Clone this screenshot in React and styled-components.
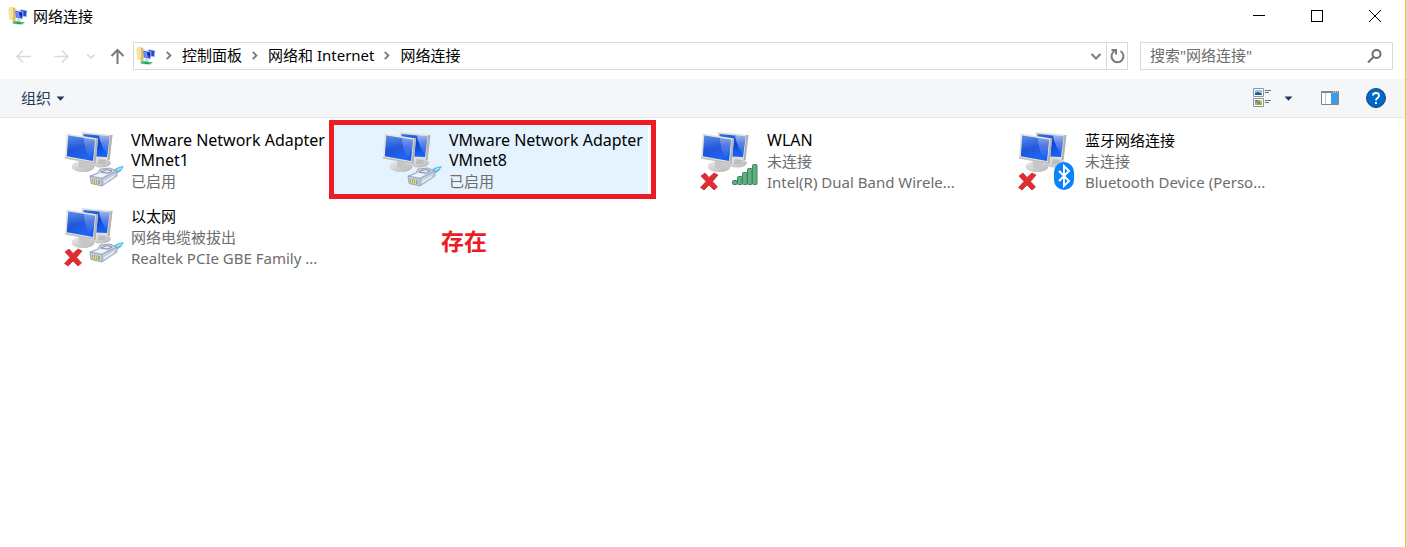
import React from "react";
import styled, { createGlobalStyle, css } from "styled-components";

const GlobalStyle = createGlobalStyle`
  * { box-sizing: border-box; }
  body {
    margin: 0;
    background: #fff;
    color: #000;
    font-family: "Noto Sans", "Noto Sans CJK SC", sans-serif;
    font-size: 15px;
    line-height: 21px;
  }
  button, input {
    font: inherit;
    color: inherit;
    border: 0;
    padding: 0;
    margin: 0;
    background: none;
  }
  button { display: flex; align-items: center; justify-content: center; }
  svg { display: block; flex: none; }
`;

const Window = styled.div`
  display: flex;
  flex-direction: column;
  min-height: 100vh;
  margin-right: 1px;
  border-right: 1px solid #fcbc1c;
  box-shadow: 1px 0 0 #dedede;
`;

const TitleBar = styled.header`
  display: flex;
  align-items: center;
  height: 32px;
  padding: 0 1px 0 8px;
`;

const Title = styled.h1`
  flex: 1;
  margin: 0 0 0 5px;
  font-size: 15px;
  font-weight: 400;
`;

const WindowButton = styled.button`
  width: 58px;
  height: 32px;
`;

const AddressRow = styled.div`
  display: flex;
  align-items: center;
  height: 47px;
  padding: 0 12px 0 13px;
`;

const NavButtons = styled.div`
  display: flex;
  align-items: center;
  margin-right: 6px;
`;

const NavButton = styled.button`
  width: 20px;
  height: 28px;
  margin-left: ${(p) => p.$gap}px;
`;

const AddressBar = styled.div`
  display: flex;
  align-items: center;
  flex: 1;
  height: 28px;
  border: 1px solid #d9d9d9;
  padding-left: 2px;
`;

const Crumbs = styled.nav`
  display: flex;
  align-items: center;
  flex: 1;
`;

const Crumb = styled.a`
  color: #000;
  text-decoration: none;
`;

const CrumbArrow = styled.span`
  display: flex;
  justify-content: center;
  width: 26px;
`;

const AddressButton = styled.button`
  width: 20px;
  height: 26px;
  ${(p) => p.$divided && css`width: 21px; border-left: 1px solid #d9d9d9;`}
`;

const SearchBox = styled.label`
  display: flex;
  align-items: center;
  width: 253px;
  height: 28px;
  margin-left: 12px;
  padding: 0 10px 0 9px;
  border: 1px solid #d9d9d9;
`;

const SearchInput = styled.input`
  flex: 1;
  min-width: 0;
  outline: 0;
  &::placeholder { color: #6d6d6d; opacity: 1; }
`;

const CommandBar = styled.div`
  display: flex;
  align-items: center;
  height: 39px;
  padding: 0 19px 0 21px;
  background: #f5f6f7;
  border-bottom: 1px solid #e5e6e8;
  color: #1e395b;
`;

const OrganizeButton = styled.button`
  gap: 5px;
  margin-right: auto;
`;

const ToolButton = styled.button`
  height: 28px;
  margin-left: ${(p) => p.$gap}px;
`;

const ConnectionList = styled.ul`
  display: grid;
  grid-template-columns: repeat(auto-fill, 314px);
  grid-auto-rows: 69px;
  gap: 7px 4px;
  margin: 0;
  padding: 7px 16px;
  list-style: none;
`;

const Connection = styled.li`
  position: relative;
  display: flex;
  padding: 5px 0 0 48px;
  background: ${(p) => (p.$selected ? "#e5f3ff" : "transparent")};
`;

const ConnectionText = styled.div`
  width: 195px;
  margin-left: 7px;
`;

const Name = styled.div`
  padding-bottom: 1px;
  font-size: ${(p) => (p.$latin ? 16 : 15)}px;
  line-height: 20px;
`;

const Detail = styled.div`
  color: #6d6d6d;
  white-space: nowrap;
`;

const Highlight = styled.div`
  position: absolute;
  inset: -5px -8px -5px -5px;
  border: 5px solid #ed1c24;
`;

const Note = styled.strong`
  position: absolute;
  top: 99px;
  left: 107px;
  color: #ed1c24;
  font-size: 23px;
  line-height: 34px;
`;

function FolderIcon() {
  return (
    <svg width="20" height="20" viewBox="0 0 20 20" aria-hidden="true">
      <path d="M0.500 1.500L5 0.500L6 15L1 13.500Z" fill="#f7e3a0" />
      <path d="M5 1.500L7.500 2V15.500L5 16.500Z" fill="#e0bd5c" />
      <path d="M12 3.500L19 4.500L18.500 11L13 10Z" fill="#2a49cf" stroke="#c6d3e6" strokeWidth="0.800" />
      <path d="M7 4.500L15 6L14.500 13L7.500 11.500Z" fill="#1226c4" stroke="#c6d3e6" strokeWidth="0.800" />
      <path d="M8 5.500L11 6Q11 9 13 12L8.200 11Z" fill="#6b8ff0" />
      <path d="M9 13L13 13.500L12.500 15H9Z" fill="#c9d0d6" />
      <path d="M4 16L8 15L17 16.500L14 18.500L6 18Z" fill="#3cc27c" />
      <path d="M9 16L13 16.500L12 18L8.500 17.500Z" fill="#149a50" />
    </svg>
  );
}

function Chevron({ down, size = 12, color = "#7a7a7a" }) {
  return (
    <svg width={size} height={size} viewBox="0 0 12 12" fill="none" stroke={color} strokeWidth="2" aria-hidden="true">
      <path d={down ? "M1.500 4L6 8.500L10.500 4" : "M3 2L7 6L3 10"} />
    </svg>
  );
}

function ArrowIcon({ direction }) {
  const paths = {
    left: "M16 9.500H2M8 3.500L2 9.500L8 15.500",
    right: "M1 9.500H15M9 3.500L15 9.500L9 15.500",
    up: "M8.500 17V3M2.500 9L8.500 3L14.500 9",
  };
  const up = direction === "up";
  return (
    <svg width="17" height="17" viewBox="0 0 17 17" fill="none" stroke={up ? "#7a7a7a" : "#dadada"} strokeWidth={up ? 2 : 1.6} aria-hidden="true">
      <path d={paths[direction]} />
    </svg>
  );
}

function Caret() {
  return (
    <svg width="9" height="5" viewBox="0 0 9 5" aria-hidden="true">
      <path d="M0.500 0.500H8.500L4.500 4.800Z" fill="#1e395b" />
    </svg>
  );
}

function IconGradients() {
  return (
    <defs>
      <linearGradient id="screen" x1="0" y1="0" x2="0.300" y2="1">
        <stop offset="0" stopColor="#2c74e4" />
        <stop offset="0.550" stopColor="#0b44d6" />
        <stop offset="1" stopColor="#1660f4" />
      </linearGradient>
      <linearGradient id="glare" x1="0" y1="0" x2="0" y2="1">
        <stop offset="0" stopColor="#fff" stopOpacity="0.550" />
        <stop offset="1" stopColor="#fff" stopOpacity="0.050" />
      </linearGradient>
      <linearGradient id="stand" x1="0" y1="0" x2="1" y2="1">
        <stop offset="0" stopColor="#ececec" />
        <stop offset="1" stopColor="#b4b4b4" />
      </linearGradient>
    </defs>
  );
}

function Monitors() {
  return (
    <>
      <ellipse cx="37" cy="33" rx="10" ry="4.500" fill="url(#stand)" />
      <path d="M35 26h7l-1 8h-7z" fill="#bdbdbd" />
      <path d="M17.500 2L48.500 5L45.500 30L19 28Z" fill="#dededc" />
      <path d="M46.500 5L48.500 5L45.500 30L43.500 30Z" fill="#b0b0ae" />
      <path d="M19.500 4L45.500 6.500L43 27L20.500 26Z" fill="url(#screen)" />
      <path d="M35 5.500L45.500 6.500L43 24Q37 17 35 5.500Z" fill="url(#glare)" />
      <ellipse cx="19" cy="36.500" rx="11.500" ry="5.500" fill="url(#stand)" />
      <path d="M15 31h9l1 6q-5 3-10 0z" fill="#c6c6c6" />
      <path d="M2.500 3.500L34 8.500L31.500 34L1 28.500Z" fill="#e4e4e2" />
      <path d="M32 8.200L34 8.500L31.500 34L29.500 33.600Z" fill="#b2b2b0" />
      <path d="M1 28.500L31.500 34L31.700 32.500L1 27Z" fill="#bfbfbd" />
      <path d="M4.300 5.500L31 9.700L29 31L2.800 26.300Z" fill="url(#screen)" />
      <path d="M4.300 5.500L20 8Q20 21 25 30.300L2.800 26.300Z" fill="url(#glare)" opacity="0.350" />
      <path d="M20 8L31 9.700L30.200 19Q28 26 25 28Q20 19 20 8Z" fill="url(#glare)" opacity="0.800" />
    </>
  );
}

function Plug() {
  return (
    <g>
      <path d="M48 43Q50 37 60 36L57 41Q54 42 51 46Z" fill="#58bfe2" />
      <path d="M50 42L57 38" stroke="#c4effc" strokeWidth="1.200" />
      <path d="M26 46L34 43L36 39L46 38L53 41L53 46L38 56L27 53.500Z" fill="#c3cede" stroke="#8c9ab0" strokeWidth="0.800" />
      <path d="M26 46L38 48.500L53 41M38 48.500V56" fill="none" stroke="#8c9ab0" strokeWidth="0.800" />
      <path d="M29 46L36 43L44 44L38 47.500Z" fill="#eff4fa" />
      <path d="M37 42L43 39.500L48 41L44 43Z" fill="#e3eaf4" stroke="#7688a2" strokeWidth="0.800" />
      <path d="M40 51L50 45L50 47L40 53.500Z" fill="#e2e9f3" />
      <path d="M28 48.500L36 50.200V54.500L28 52.800Z" fill="#a0a898" />
      <path d="M29.500 49V53M31.500 49.500V53.500M33.500 50V54" stroke="#e8dc6a" />
    </g>
  );
}

function Signal() {
  return (
    <g fill="#62ae80" stroke="#3a8760">
      {[0, 1, 2, 3, 4].map((i) => (
        <rect key={i} x={32.5 + i * 5} y={50.5 - i * 4} width="4.500" height={4 + i * 4} rx="1" />
      ))}
    </g>
  );
}

function Bluetooth() {
  return (
    <g>
      <rect x="36" y="32" width="20" height="28" rx="10" fill="#0a84f8" />
      <path d="M41 41L51 51L46 56V36L51 41L41 51" fill="none" stroke="#fff" strokeWidth="1.900" />
    </g>
  );
}

function Cross() {
  return (
    <path
      d="M1 46L5 43L9 47.500L14 43L18 45L12.500 51.500L17.500 57L14 60L9 55L4 60L0.500 57.500L6 51.500Z"
      fill="#e12b30"
      stroke="#c4343a"
      strokeWidth="0.800"
      strokeLinejoin="round"
    />
  );
}

function ConnectionIcon({ badge, disconnected }) {
  const Badge = { plug: Plug, signal: Signal, bluetooth: Bluetooth }[badge];
  return (
    <svg width="60" height="62" viewBox="0 0 60 62" aria-hidden="true">
      <IconGradients />
      <Monitors />
      <Badge />
      {disconnected && <Cross />}
    </svg>
  );
}

const crumbs = ["控制面板", "网络和 Internet", "网络连接"];

const connections = [
  { name: "VMware Network Adapter VMnet1", latin: true, details: ["已启用"], badge: "plug" },
  { name: "VMware Network Adapter VMnet8", latin: true, details: ["已启用"], badge: "plug", selected: true, note: "存在" },
  { name: "WLAN", latin: true, details: ["未连接", "Intel(R) Dual Band Wirele..."], badge: "signal", disconnected: true },
  { name: "蓝牙网络连接", details: ["未连接", "Bluetooth Device (Perso..."], badge: "bluetooth", disconnected: true },
  { name: "以太网", details: ["网络电缆被拔出", "Realtek PCIe GBE Family ..."], badge: "plug", disconnected: true },
];

export default function App() {
  return (
    <Window>
      <GlobalStyle />
      <TitleBar>
        <FolderIcon />
        <Title>网络连接</Title>
        <WindowButton aria-label="最小化">
          <svg width="12" height="12" viewBox="0 0 12 12"><path d="M0 5.500H12" stroke="#000" /></svg>
        </WindowButton>
        <WindowButton aria-label="最大化">
          <svg width="12" height="12" viewBox="0 0 12 12"><rect x="0.500" y="0.500" width="11" height="11" fill="none" stroke="#000" /></svg>
        </WindowButton>
        <WindowButton aria-label="关闭">
          <svg width="12" height="12" viewBox="0 0 12 12"><path d="M0 0L12 12M12 0L0 12" stroke="#000" /></svg>
        </WindowButton>
      </TitleBar>
      <AddressRow>
        <NavButtons>
          <NavButton $gap={0} aria-label="后退"><ArrowIcon direction="left" /></NavButton>
          <NavButton $gap={18} aria-label="前进"><ArrowIcon direction="right" /></NavButton>
          <NavButton $gap={10} aria-label="最近的位置"><Chevron down size={10} color="#dadada" /></NavButton>
          <NavButton $gap={6} aria-label="向上"><ArrowIcon direction="up" /></NavButton>
        </NavButtons>
        <AddressBar>
          <FolderIcon />
          <Crumbs aria-label="地址">
            {crumbs.map((crumb) => (
              <React.Fragment key={crumb}>
                <CrumbArrow><Chevron size={11} /></CrumbArrow>
                <Crumb href="#">{crumb}</Crumb>
              </React.Fragment>
            ))}
          </Crumbs>
          <AddressButton aria-label="以前的位置"><Chevron down /></AddressButton>
          <AddressButton $divided aria-label="刷新">
            <svg width="15" height="16" viewBox="0 0 15 16" fill="none" stroke="#7a7a7a" strokeWidth="2">
              <path d="M10.500 3A6 6 0 1 1 4.500 3M1.500 2H6V6.500" />
            </svg>
          </AddressButton>
        </AddressBar>
        <SearchBox>
          <SearchInput type="search" aria-label="搜索" placeholder={'搜索"网络连接"'} />
          <svg width="15" height="15" viewBox="0 0 15 15" fill="none" stroke="#6e6e6e" strokeWidth="2">
            <circle cx="9.500" cy="6" r="4" />
            <path d="M6.500 9L1 14.500" />
          </svg>
        </SearchBox>
      </AddressRow>
      <CommandBar>
        <OrganizeButton>组织<Caret /></OrganizeButton>
        <ToolButton $gap={0} aria-label="更改视图">
          <svg width="18" height="20" viewBox="0 0 18 20">
            <path d="M0.500 0.500H10.500V8.500H0.500ZM0.500 10.500H10.500V18.500H0.500Z" fill="#fff" stroke="#8e959c" />
            <path d="M2 2H9V7H2Z" fill="#8cc8f0" />
            <path d="M2 5L5 4L9 6V7H2Z" fill="#245685" />
            <path d="M2 12H9V17H2Z" fill="#8dbd50" />
            <path d="M2 12H5V14H2Z" fill="#4e82cf" />
            <path d="M5 14H7V16H5Z" fill="#dd5031" />
            <path d="M7 12H9V14H7Z" fill="#edc449" />
            <path d="M12 2.500H18M12 4.500H16M12 12.500H18M12 14.500H16" stroke="#6e7276" />
          </svg>
        </ToolButton>
        <ToolButton $gap={13} aria-label="更多视图选项"><Caret /></ToolButton>
        <ToolButton $gap={28} aria-label="预览窗格">
          <svg width="18" height="14" viewBox="0 0 18 14">
            <path d="M0.500 0.500H17.500V13.500H0.500Z" fill="#fff" stroke="#7f868c" />
            <path d="M0 0H18V2H0Z" fill="#7f868c" />
            <path d="M4.500 2V13" stroke="#bfc3c7" />
            <path d="M10 2H17V13H10Z" fill="#3f9be5" />
            <path d="M12 1H13M14 1H15M16 1H17" stroke="#fff" />
          </svg>
        </ToolButton>
        <ToolButton $gap={27} aria-label="帮助">
          <svg width="20" height="20" viewBox="0 0 20 20">
            <circle cx="10" cy="10" r="9.500" fill="#0067c5" stroke="#164a7c" />
            <path d="M7 7.500Q7 5 10 5Q13 5 13 7.500Q13 9 11.500 10Q10 11 10 12.500M10 14V16" fill="none" stroke="#fff" strokeWidth="1.900" />
          </svg>
        </ToolButton>
      </CommandBar>
      <ConnectionList>
        {connections.map((c) => (
          <Connection key={c.name} $selected={c.selected}>
            <ConnectionIcon badge={c.badge} disconnected={c.disconnected} />
            <ConnectionText>
              <Name $latin={c.latin}>{c.name}</Name>
              {c.details.map((d) => <Detail key={d}>{d}</Detail>)}
            </ConnectionText>
            {c.note && (
              <>
                <Highlight />
                <Note>{c.note}</Note>
              </>
            )}
          </Connection>
        ))}
      </ConnectionList>
    </Window>
  );
}
